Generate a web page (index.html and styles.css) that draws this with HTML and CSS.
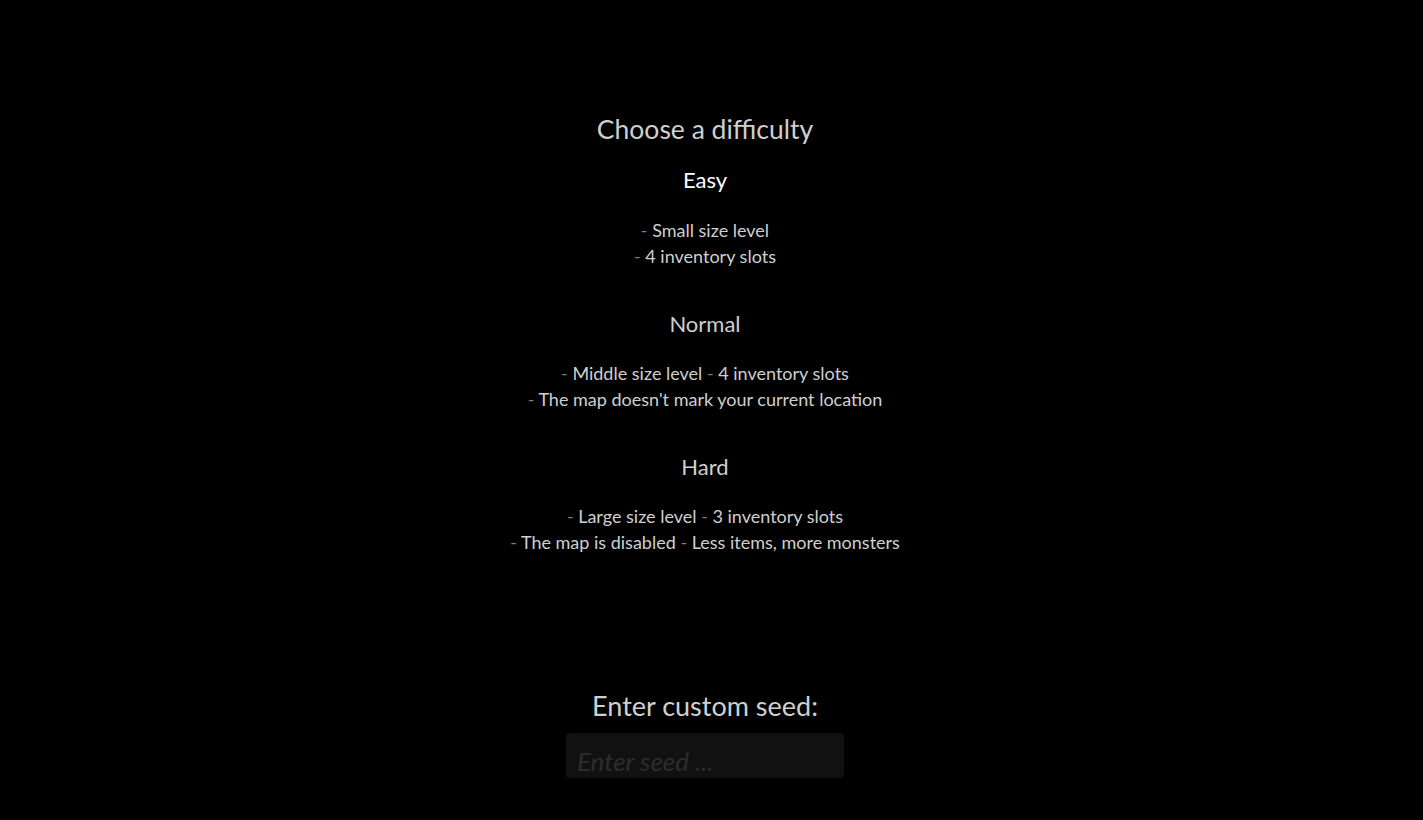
FILE: index.html
```html
<!DOCTYPE html>
<html>
<head>
<meta charset="utf-8">
<link rel="stylesheet" href="styles.css">
</head>
<body>
<main class="page">
  <h1 class="title">Choose a difficulty</h1>
  <section class="level">
    <h2 class="level-name active">Easy</h2>
    <p class="level-desc first"><span class="dash">-</span> Small size level<br><span class="dash">-</span> 4 inventory slots</p>
  </section>
  <section class="level">
    <h2 class="level-name">Normal</h2>
    <p class="level-desc"><span class="dash">-</span> Middle size level <span class="dash">-</span> 4 inventory slots<br><span class="dash">-</span> The map doesn't mark your current location</p>
  </section>
  <section class="level">
    <h2 class="level-name">Hard</h2>
    <p class="level-desc"><span class="dash">-</span> Large size level <span class="dash">-</span> 3 inventory slots<br><span class="dash">-</span> The map is disabled <span class="dash">-</span> Less items, more monsters</p>
  </section>
  <div class="seed">
    <label class="seed-label" for="seed">Enter custom seed:</label>
    <input id="seed" class="seed-input" type="text" placeholder="Enter seed ...">
  </div>
</main>
</body>
</html>
```

FILE: styles.css
```css
html, body {
  margin: 0;
  padding: 0;
  background: #000;
  height: 100%;
  overflow: hidden;
}
body {
  font-family: "Lato", "Open Sans", sans-serif;
  color: #cccccc;
}
.page {
  display: flex;
  flex-direction: column;
  align-items: center;
  padding-top: 112px;
  padding-right: 13px;
  text-align: center;
}
.title {
  margin: 0;
  font-size: 26.5px;
  line-height: 34px;
  font-weight: 400;
  color: #cfcfcf;
}
.level {
  display: flex;
  flex-direction: column;
  align-items: center;
}
.level:first-of-type { margin-top: 19px; }
.level + .level { margin-top: 40px; }
.level-name {
  margin: 0;
  font-size: 22px;
  line-height: 30px;
  font-weight: 400;
  color: #cfcfcf;
}
.level-name.active { color: #fff; }
.level-desc {
  margin: 22px 0 0;
  font-size: 18px;
  line-height: 25.5px;
  color: #cfcfcf;
}
.level-desc.first { margin-top: 23px; }
.dash { color: #7e7e7e; }
.seed {
  margin-top: 134px;
  display: flex;
  flex-direction: column;
  align-items: center;
  gap: 10px;
}
.seed-label {
  font-size: 27px;
  line-height: 34px;
  color: #cfcfcf;
}
.seed-input {
  box-sizing: border-box;
  width: 278px;
  height: 45px;
  border: none;
  outline: none;
  border-radius: 4px;
  background: #111;
  padding: 10px 10px 0 11px;
  font-family: inherit;
  font-size: 26px;
  font-style: italic;
  color: #ccc;
}
.seed-input::placeholder {
  color: #2c2c2c;
  font-style: italic;
}
```
